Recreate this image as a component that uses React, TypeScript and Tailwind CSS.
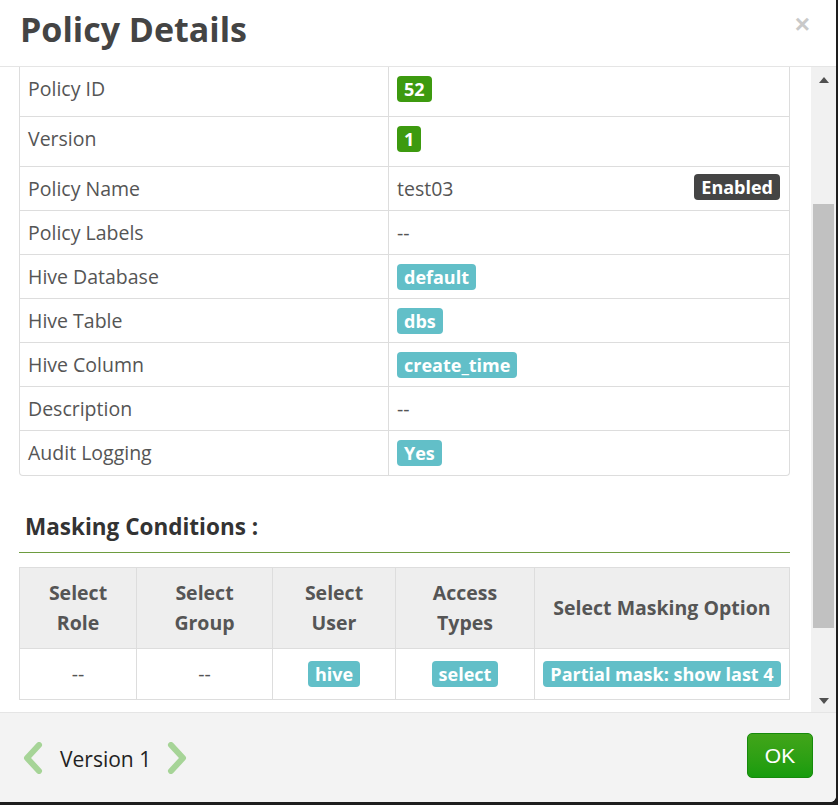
import React from "react";

const font = { fontFamily: '"Open Sans", "Noto Sans", sans-serif' };

function Badge({ children, color, className = "" }: { children: React.ReactNode; color: "green" | "teal" | "dark"; className?: string }) {
  const bg = color === "green" ? "bg-[#3d9a0f]" : color === "teal" ? "bg-[#62bfc8]" : "bg-[#444444]";
  return (
    <span className={`inline-flex items-center h-[26px] px-[7px] rounded-[4px] text-white font-bold text-[18px] leading-none ${bg} ${className}`}>
      {children}
    </span>
  );
}

function Row({ label, tall, children }: { label: string; tall?: boolean; children: React.ReactNode }) {
  return (
    <div className={`flex border-b border-[#dddddd] last:border-b-0 ${tall ? "h-[50px]" : "h-[44px]"}`}>
      <div className="w-[369px] shrink-0 border-r border-[#dddddd] flex items-start pt-[8px] pl-[8px] text-[19.5px] leading-[28px] text-[#555555]">
        {label}
      </div>
      <div className="flex-1 flex items-start pt-[9px] pl-[8px] pr-[9px] text-[19.5px] leading-[26px] text-[#555555]">{children}</div>
    </div>
  );
}

function Chevron({ dir }: { dir: "left" | "right" }) {
  return (
    <svg width="22" height="32" viewBox="0 0 22 32">
      <path
        d={dir === "left" ? "M17 3 L5 16 L17 29" : "M5 3 L17 16 L5 29"}
        fill="none"
        stroke="#a6d497"
        strokeWidth="6"
        strokeLinecap="round"
        strokeLinejoin="round"
      />
    </svg>
  );
}

export default function App() {
  return (
    <div className="w-[838px] h-[805px] bg-[#1e1e1e] overflow-hidden" style={font}>
      <div className="w-[836px] h-[802px] bg-white rounded-br-[6px] overflow-hidden flex flex-col">
        {/* header */}
        <div className="h-[67px] shrink-0 border-b border-[#e5e5e5] flex items-start justify-between pl-[20px] pr-[26px]">
          <h1 className="text-[34px] font-bold text-[#444444] leading-none mt-[12px]">Policy Details</h1>
          <span className="text-[26px] font-bold text-[#c9c9c9] leading-none mt-[11px]" style={{ fontFamily: '"Liberation Sans", Arial, sans-serif' }}>
            ×
          </span>
        </div>

        {/* body */}
        <div className="h-[645px] shrink-0 flex">
          <div className="w-[811px] pl-[19px] overflow-hidden">
            <div className="w-[771px] border border-t-0 border-[#dddddd] rounded-b-[4px]">
              <Row label="Policy ID" tall>
                <Badge color="green">52</Badge>
              </Row>
              <Row label="Version" tall>
                <Badge color="green">1</Badge>
              </Row>
              <Row label="Policy Name">
                <span className="flex-1 leading-[26px]">test03</span>
                <Badge color="dark" className="-mt-[2px]">Enabled</Badge>
              </Row>
              <Row label="Policy Labels">--</Row>
              <Row label="Hive Database">
                <Badge color="teal">default</Badge>
              </Row>
              <Row label="Hive Table">
                <Badge color="teal">dbs</Badge>
              </Row>
              <Row label="Hive Column">
                <Badge color="teal">create_time</Badge>
              </Row>
              <Row label="Description">--</Row>
              <Row label="Audit Logging">
                <Badge color="teal">Yes</Badge>
              </Row>
            </div>

            <div className="mt-[37px] w-[771px] h-[40px] border-b border-[#6d9c3f] pl-[6px] text-[22.5px] font-bold text-[#333333] leading-[30px]">
              <span className="relative top-[-1px]">Masking Conditions :</span>
            </div>

            <div className="mt-[14px] w-[771px] border border-[#dddddd]">
              <div className="grid grid-cols-[117px_136px_123px_139px_254px] h-[81px] bg-[#eeeeee] border-b border-[#dddddd] text-[19.5px] font-bold text-[#555555] leading-[30px] text-center">
                <div className="border-r border-[#dddddd] flex items-center justify-center">
                  Select<br />Role
                </div>
                <div className="border-r border-[#dddddd] flex items-center justify-center">
                  Select<br />Group
                </div>
                <div className="border-r border-[#dddddd] flex items-center justify-center">
                  Select<br />User
                </div>
                <div className="border-r border-[#dddddd] flex items-center justify-center">
                  Access<br />Types
                </div>
                <div className="flex items-center justify-center">Select Masking Option</div>
              </div>
              <div className="grid grid-cols-[117px_136px_123px_139px_254px] h-[50px] text-[19.5px] text-[#555555] text-center">
                <div className="border-r border-[#dddddd] flex items-center justify-center">--</div>
                <div className="border-r border-[#dddddd] flex items-center justify-center">--</div>
                <div className="border-r border-[#dddddd] flex items-center justify-center">
                  <Badge color="teal">hive</Badge>
                </div>
                <div className="border-r border-[#dddddd] flex items-center justify-center">
                  <Badge color="teal">select</Badge>
                </div>
                <div className="flex items-center justify-center">
                  <Badge color="teal">Partial mask: show last 4</Badge>
                </div>
              </div>
            </div>
          </div>

          {/* scrollbar */}
          <div className="w-[25px] bg-[#f1f1f1] flex flex-col items-center justify-between py-[10px] relative">
            <div className="w-0 h-0 border-l-[5.5px] border-r-[5.5px] border-b-[6px] border-l-transparent border-r-transparent border-b-[#505050]" />
            <div className="absolute left-[2px] top-[137px] w-[21px] h-[424px] bg-[#c1c1c1]" />
            <div className="w-0 h-0 border-l-[5px] border-r-[5px] border-t-[6px] border-l-transparent border-r-transparent border-t-[#505050] mb-[-2px]" />
          </div>
        </div>

        {/* footer */}
        <div className="flex-1 border-t border-[#e5e5e5] bg-[#f3f3f3] flex items-center justify-between pl-[22px] pr-[23px]">
          <div className="flex items-center">
            <Chevron dir="left" />
            <span className="ml-[16px] mr-[15px] mt-[5px] text-[21px] text-[#222222]">Version 1</span>
            <Chevron dir="right" />
          </div>
          <button
            className="w-[66px] h-[45px] rounded-[5px] border border-[#168a0c] bg-gradient-to-b from-[#41a51a] to-[#169c0e] text-white text-[21px] mb-[4px]"
            style={{ fontFamily: '"Liberation Sans", Arial, sans-serif' }}
          >
            OK
          </button>
        </div>
      </div>
    </div>
  );
}
